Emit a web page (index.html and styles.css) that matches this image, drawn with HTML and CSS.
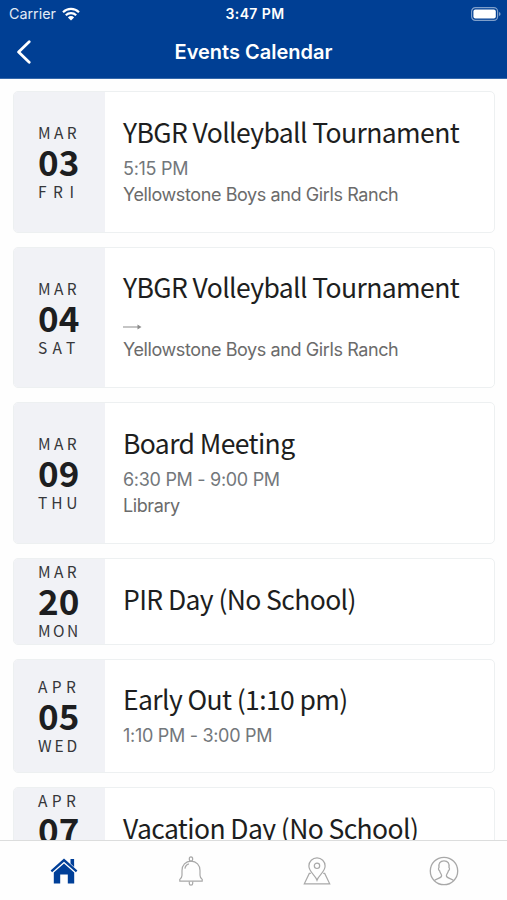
FILE: index.html
```html
<!DOCTYPE html>
<html lang="en">
  <head>
    <meta charset="utf-8">
    <meta name="viewport" content="width=device-width, initial-scale=1">
    <title>Events Calendar</title>
    <link rel="stylesheet" href="styles.css">
  </head>
  <body>
    <header class="header">
      <div class="status-bar">
        <div class="carrier">
          <span>Carrier</span>
          <svg class="wifi" viewBox="0 0 18 14" width="18" height="14">
            <path d="M1 5.2a11.5 11.5 0 0 1 16 0M3.8 8.2a7.5 7.5 0 0 1 10.4 0" fill="none" stroke="#fff" stroke-width="2.2"/>
            <path d="M9 13.5L5.9 10.4a4.4 4.4 0 0 1 6.2 0z" fill="#fff"/>
          </svg>
        </div>
        <div class="clock">3:47 PM</div>
        <div class="battery">
          <svg viewBox="0 0 30 14" width="30" height="14">
            <rect x="0.6" y="0.6" width="26" height="12.8" rx="3.8" fill="none" stroke="#7f9fca" stroke-width="1.2"/>
            <rect x="2.4" y="2.4" width="22.4" height="9.2" rx="2" fill="#fff"/>
            <path d="M28 5v4q1.6-.6 1.6-2T28 5z" fill="#7f9fca"/>
          </svg>
        </div>
      </div>
      <div class="title-bar">
        <svg class="back" viewBox="0 0 16 24" width="16" height="24">
          <path d="M13.2 1.8L2.6 12l10.6 10.2" fill="none" stroke="#fff" stroke-width="2.8" stroke-linecap="round" stroke-linejoin="round"/>
        </svg>
        <h1>Events Calendar</h1>
      </div>
    </header>

    <main class="events">
      <article class="card">
        <div class="date">
          <span class="month">MAR</span>
          <span class="day">03</span>
          <span class="weekday fri">FRI</span>
        </div>
        <div class="details">
          <h2>YBGR Volleyball Tournament</h2>
          <p>5:15 PM</p>
          <p class="place">Yellowstone Boys and Girls Ranch</p>
        </div>
      </article>

      <article class="card">
        <div class="date">
          <span class="month">MAR</span>
          <span class="day">04</span>
          <span class="weekday sat">SAT</span>
        </div>
        <div class="details">
          <h2>YBGR Volleyball Tournament</h2>
          <p class="all-day">
            <svg viewBox="0 0 19 6" width="19" height="6">
              <path d="M0 3h16" stroke="#8c8c8c" stroke-width="1.2"/>
              <path d="M14.5 .5L18.5 3l-4 2.5z" fill="#8c8c8c"/>
            </svg>
          </p>
          <p class="place">Yellowstone Boys and Girls Ranch</p>
        </div>
      </article>

      <article class="card">
        <div class="date">
          <span class="month">MAR</span>
          <span class="day">09</span>
          <span class="weekday thu">THU</span>
        </div>
        <div class="details">
          <h2>Board Meeting</h2>
          <p>6:30 PM - 9:00 PM</p>
          <p class="place">Library</p>
        </div>
      </article>

      <article class="card title-only">
        <div class="date">
          <span class="month">MAR</span>
          <span class="day">20</span>
          <span class="weekday mon">MON</span>
        </div>
        <div class="details">
          <h2>PIR Day (No School)</h2>
        </div>
      </article>

      <article class="card no-place">
        <div class="date">
          <span class="month apr">APR</span>
          <span class="day">05</span>
          <span class="weekday wed">WED</span>
        </div>
        <div class="details">
          <h2>Early Out (1:10 pm)</h2>
          <p>1:10 PM - 3:00 PM</p>
        </div>
      </article>

      <article class="card title-only">
        <div class="date">
          <span class="month apr">APR</span>
          <span class="day">07</span>
          <span class="weekday fri">FRI</span>
        </div>
        <div class="details">
          <h2>Vacation Day (No School)</h2>
        </div>
      </article>
    </main>

    <nav class="tab-bar">
      <a class="tab active">
        <svg viewBox="0 0 28 26" width="28" height="26">
          <path d="M20.5 1h3.6v8l-3.6-3.4z" fill="#003f98"/>
          <path d="M.6 12.6L14 .6l13.4 12-1.5 1.6L14 3.7 2.1 14.2z" fill="#003f98"/>
          <path d="M14 5.4l10.2 9.1v10.9h-6.4v-9h-7.6v9H3.8V14.5z" fill="#003f98"/>
        </svg>
      </a>
      <a class="tab">
        <svg viewBox="0 0 26 30" width="26" height="30" fill="none" stroke="#a8a8a8" stroke-width="1.2">
          <path d="M13 5.2c5.5 0 9 4.1 9 9.2v4.8c0 2 .7 3 2.2 4.2v1.8H1.8v-1.8C3.3 22.2 4 21.2 4 19.2v-4.8c0-5.1 3.5-9.2 9-9.2z"/>
          <ellipse cx="13" cy="3" rx="1.7" ry="2.2"/>
          <path d="M11.3 25.4v2a1.7 1.7 0 0 0 3.4 0v-2M6.9 12.6c.4-2.6 1.8-4.2 4-4.8"/>
        </svg>
      </a>
      <a class="tab">
        <svg viewBox="0 0 28 30" width="28" height="30" fill="none" stroke="#a8a8a8" stroke-width="1.2">
          <path d="M14 24.2C12.4 19.5 5.9 15.7 5.9 10a8.1 8.1 0 0 1 16.2 0c0 5.7-6.5 9.5-8.1 14.2z"/>
          <circle cx="14" cy="9.8" r="2.7"/>
          <path d="M7.8 17.4H6.3L1.3 27.8h25.4l-5-10.4h-1.5"/>
        </svg>
      </a>
      <a class="tab">
        <svg viewBox="0 0 30 30" width="30" height="30" fill="none" stroke="#a8a8a8" stroke-width="1.3">
          <circle cx="15" cy="15" r="13.7"/>
          <path d="M5.3 24.6c1.6-2.3 7.3-2.1 7.3-4.9 0-1.5-1.5-2.6-2-4.9-1.2-.5-1.4-2.8-.6-3.3-.5-4 1-6.7 5-6.7s5.500 2.700 5 6.700c.8.5.6 2.800-.6 3.300-.5 2.300-2 3.400-2 4.900 0 2.800 5.700 2.600 7.300 4.900"/>
        </svg>
      </a>
    </nav>
  </body>
</html>
```

FILE: styles.css
```css
* {
  box-sizing: border-box;
}
body {
  margin: 0;
  height: 900px;
  display: flex;
  flex-direction: column;
  overflow: hidden;
  background-color: #fefefe;
  font-family: Inter, "Liberation Sans", sans-serif;
  color: #1d1e20;
}

/* Header */
.header {
  flex: none;
  height: 79px;
  background-color: #003f94;
  border-bottom: 1px solid #3568aa;
  color: #fff;
}
.status-bar {
  display: grid;
  grid-template-columns: 1fr auto 1fr;
  align-items: center;
  height: 27px;
  padding: 0 6px 0 9px;
  font-size: 14.3px;
}
.carrier {
  display: flex;
  align-items: center;
  gap: 6px;
  color: #e3ebf6;
}
.clock {
  font-size: 14px;
  font-weight: 600;
  letter-spacing: 0.4px;
}
.battery {
  display: flex;
  justify-content: flex-end;
}
.title-bar {
  display: grid;
  grid-template-columns: 40px 1fr 40px;
  align-items: center;
  height: 50px;
  padding: 0 16px;
}
.title-bar h1 {
  margin: 0;
  font-size: 20px;
  font-weight: 600;
  text-align: center;
}

/* Event list */
.events {
  flex: 1;
  min-height: 0;
  overflow: hidden;
  display: flex;
  flex-direction: column;
  gap: 14px;
  padding: 12px 12px 0 13px;
}
.card {
  flex: none;
  display: flex;
  height: 141.7px;
  border: 1px solid #edf0f1;
  border-radius: 5px;
  background-color: #fff;
  overflow: hidden;
}
.card.no-place {
  height: 114.3px;
}
.card.title-only {
  height: 86.6px;
}
.date {
  flex: none;
  width: 91px;
  display: flex;
  flex-direction: column;
  justify-content: center;
  padding-left: 24px;
  background-color: #f1f2f6;
  font-family: "Noto Sans CJK SC", "Noto Sans", sans-serif;
}
.month,
.weekday {
  font-size: 15.5px;
  line-height: 24px;
  letter-spacing: 3.4px;
  color: #36373a;
}
.weekday {
  padding-top: 1px;
}
.apr {
  letter-spacing: 4.4px;
}
.fri {
  letter-spacing: 6.5px;
}
.sat {
  letter-spacing: 5.2px;
}
.thu {
  letter-spacing: 3.9px;
}
.mon {
  letter-spacing: 2.4px;
}
.wed {
  letter-spacing: 2.9px;
}
.day {
  font-size: 35px;
  font-weight: bold;
  line-height: 34px;
}
.date {
  padding-bottom: 1px;
}
.details {
  padding: 20.6px 0 0 18px;
}
.details h2 {
  margin: 0 0 5px;
  font-family: "Noto Sans CJK SC", "Noto Sans", sans-serif;
  font-size: 26.5px;
  font-weight: normal;
  line-height: 38px;
  letter-spacing: -0.6px;
  white-space: nowrap;
}
.details p {
  margin: 0;
  height: 26px;
  font-size: 18px;
  line-height: 26px;
  letter-spacing: -0.3px;
  color: #73777b;
}
.details .place {
  letter-spacing: -0.4px;
  color: #6b6b6b;
}
.details .all-day {
  display: flex;
  align-items: center;
  padding-top: 5px;
}

/* Bottom tabs */
.tab-bar {
  flex: none;
  display: grid;
  grid-template-columns: repeat(4, 1fr);
  height: 60px;
  padding-left: 1px;
  border-top: 1px solid #dcdddd;
  background-color: #fefefe;
}
.tab {
  display: flex;
  align-items: center;
  justify-content: center;
}
```
